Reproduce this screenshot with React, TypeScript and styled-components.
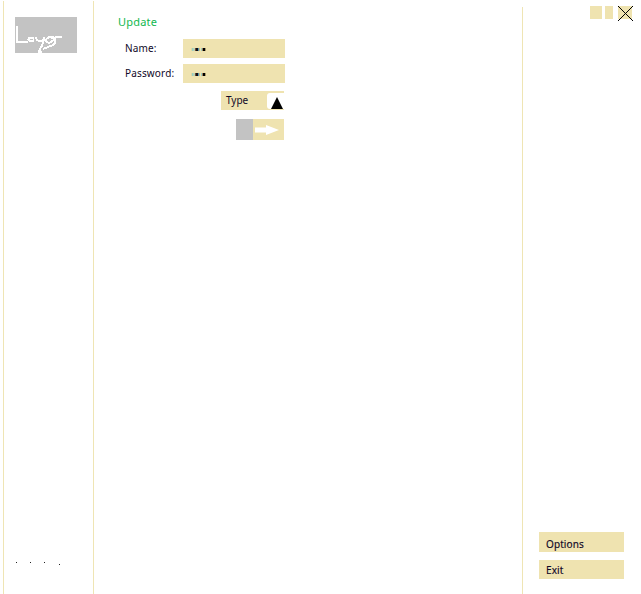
import React from "react";
import styled, { createGlobalStyle } from "styled-components";

const GlobalStyle = createGlobalStyle`
  html, body {
    margin: 0;
    padding: 0;
    background: #ffffff;
  }
  body {
    font-family: "Noto Sans", "DejaVu Sans", sans-serif;
    font-size: 10px;
    color: #100828;
  }
`;

const sand = "#efe3b0";
const lineColor = "#efe5b4";

const Page = styled.div`
  display: flex;
  width: 641px;
  height: 594px;
  padding-left: 3px;
  box-sizing: border-box;
  overflow: hidden;
`;

const Sidebar = styled.aside`
  width: 91px;
  height: 593px;
  margin-top: 1px;
  flex: none;
  display: flex;
  flex-direction: column;
  justify-content: space-between;
  box-sizing: border-box;
  border-left: 1px solid ${lineColor};
  border-right: 1px solid ${lineColor};
  padding: 16px 0 29px 11px;
`;

const LogoBox = styled.div`
  width: 62px;
  height: 36px;
  background: #c3c3c3;
`;

const Dots = styled.div`
  display: flex;
  align-items: flex-start;
  gap: 13px;
  padding-left: 1px;
  height: 3px;
`;

const Dot = styled.span<{ $low?: boolean }>`
  width: 1px;
  height: 1px;
  background: #222222;
  margin-top: ${({ $low }) => ($low ? "2px" : "0")};
  margin-left: ${({ $low }) => ($low ? "1px" : "0")};
`;

const Main = styled.main`
  width: 428px;
  flex: none;
  box-sizing: border-box;
  padding: 14px 0 0 24px;
`;

const Title = styled.h1`
  margin: 0 0 10px;
  font-size: 11px;
  line-height: 15px;
  font-weight: 400;
  color: #12b84f;
  letter-spacing: 0.2px;
`;

const Form = styled.form`
  width: 167px;
  display: flex;
  flex-direction: column;
  align-items: flex-end;
`;

const Row = styled.div`
  width: 100%;
  height: 19px;
  margin-bottom: 6px;
  display: flex;
  align-items: center;
  justify-content: space-between;
  padding-left: 7px;
  box-sizing: border-box;
`;

const Label = styled.label`
  font-size: 10px;
  line-height: 14px;
  letter-spacing: 0.15px;
  margin-top: -2px;
`;

const Field = styled.div`
  width: 102px;
  height: 19px;
  background: ${sand};
  display: flex;
  align-items: center;
  padding: 2px 0 0 8px;
  box-sizing: border-box;
`;

const TypeSelect = styled.div`
  width: 63px;
  height: 19px;
  margin: 2px 1px 0 0;
  background: ${sand};
  display: flex;
  align-items: center;
  justify-content: space-between;
  padding-left: 5px;
  box-sizing: border-box;
  font-size: 10px;
  line-height: 16px;
`;

const TypeLabel = styled.span`
  margin-top: -2px;
`;

const TypeToggle = styled.span`
  width: 17px;
  height: 16px;
  margin-top: 1px;
  background: #ffffff;
  border-radius: 3px 0 0 3px;
  display: flex;
  align-items: flex-end;
  justify-content: flex-end;
  padding-right: 1px;
  box-sizing: border-box;
`;

const Submit = styled.button`
  width: 48px;
  height: 21px;
  margin: 9px 1px 0 0;
  padding: 0;
  border: 0;
  background: ${sand};
  display: flex;
  align-items: stretch;
`;

const SubmitGrey = styled.span`
  width: 17px;
  background: #c3c3c3;
`;

const SubmitArrow = styled.span`
  flex: 1;
  display: flex;
  align-items: center;
  padding-left: 2px;
`;

const Right = styled.aside`
  width: 119px;
  height: 587px;
  margin-top: 7px;
  flex: none;
  box-sizing: border-box;
  border-left: 1px solid ${lineColor};
  display: flex;
  flex-direction: column;
  justify-content: space-between;
  padding: 0 0 15px 16px;
`;

const WindowControls = styled.div`
  display: flex;
  align-items: flex-start;
  justify-content: flex-end;
  gap: 3px;
  margin: -1px 9px 0 0;
`;

const WinBtn = styled.span<{ $w: number }>`
  width: ${({ $w }) => $w}px;
  height: 13px;
  background: ${sand};
  display: block;
`;

const CloseBtn = styled.span`
  width: 14px;
  height: 13px;
  margin-left: 2px;
  background: ${sand};
  display: block;
`;

const Menu = styled.nav`
  display: flex;
  flex-direction: column;
  gap: 8px;
`;

const MenuItem = styled.div<{ $h: number }>`
  width: 85px;
  height: ${({ $h }) => $h}px;
  background: ${sand};
  padding-left: 7px;
  box-sizing: border-box;
  font-size: 10px;
  line-height: ${({ $h }) => ($h === 20 ? 24 : 20)}px;
  letter-spacing: 0.1px;
  -webkit-text-stroke: 0.15px #100828;
`;

const Masked = () => (
  <svg width="17" height="3" viewBox="0 0 17 3" shapeRendering="crispEdges">
    <rect x="0" width="1" height="3" fill="#e0d8a0" />
    <rect x="1" width="1" height="3" fill="#98d0c8" />
    <rect x="2" width="2" height="3" fill="#b8d4b8" />
    <rect x="4" width="1" height="3" fill="#704830" />
    <rect x="5" width="2" height="3" fill="#101018" />
    <rect x="7" width="1" height="3" fill="#5098b0" />
    <rect x="8" width="1" height="3" fill="#c8b888" />
    <rect x="10" width="1" height="3" fill="#98d0c8" />
    <rect x="11" width="1" height="3" fill="#a08058" />
    <rect x="12" width="2" height="3" fill="#000000" />
    <rect x="14" width="1" height="3" fill="#a89868" />
  </svg>
);

export default function App() {
  return (
    <>
      <GlobalStyle />
      <Page>
        <Sidebar>
          <LogoBox>
            <svg width="62" height="36" viewBox="0 0 62 36" fill="none" stroke="#ffffff" strokeWidth="2" shapeRendering="crispEdges">
              <path d="M2 9V24.5H13" />
              <path d="M13.5 22.5C14 20 18.5 20 18.5 22.5C18.5 25 14 25 13.5 22.5Z" />
              <path d="M21 20C21 24 25 25 28 23M29 20C29 25 27 29 25 32L24 35H27" />
              <path d="M39 20C35 19 31 21 31 24C33 27 37 26 40 21C41 25 40 27 38 28L28 32M36 21L47 20" />
            </svg>
          </LogoBox>
          <Dots>
            <Dot />
            <Dot />
            <Dot />
            <Dot $low />
          </Dots>
        </Sidebar>
        <Main>
          <Title>Update</Title>
          <Form>
            <Row>
              <Label>Name:</Label>
              <Field>
                <Masked />
              </Field>
            </Row>
            <Row>
              <Label>Password:</Label>
              <Field>
                <Masked />
              </Field>
            </Row>
            <TypeSelect>
              <TypeLabel>Type</TypeLabel>
              <TypeToggle>
                <svg width="12" height="12" viewBox="0 0 12 12">
                  <path d="M6 0L12 12H0Z" fill="#000000" />
                </svg>
              </TypeToggle>
            </TypeSelect>
            <Submit type="button">
              <SubmitGrey />
              <SubmitArrow>
                <svg width="24" height="10" viewBox="0 0 24 10">
                  <path d="M0 2.5H11V0L24 5L11 10V7.5H0Z" fill="#ffffff" />
                </svg>
              </SubmitArrow>
            </Submit>
          </Form>
        </Main>
        <Right>
          <WindowControls>
            <WinBtn $w={12} />
            <WinBtn $w={8} />
            <CloseBtn>
              <svg width="15" height="15" viewBox="0 0 15 15" stroke="#000000" strokeWidth="1">
                <path d="M0 0L15 15M15 0L0 15" />
              </svg>
            </CloseBtn>
          </WindowControls>
          <Menu>
            <MenuItem $h={20}>Options</MenuItem>
            <MenuItem $h={19}>Exit</MenuItem>
          </Menu>
        </Right>
      </Page>
    </>
  );
}
